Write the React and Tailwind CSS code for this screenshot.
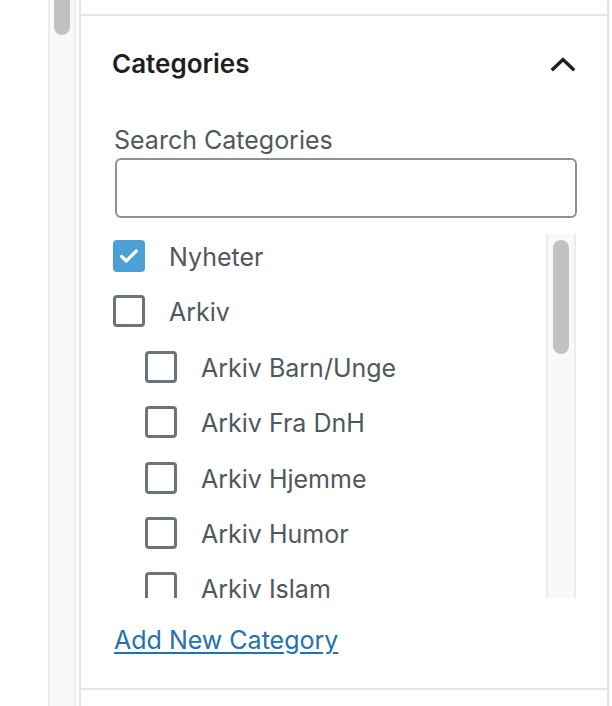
import React from 'react';

const categories = [
  { name: 'Nyheter', checked: true, child: false },
  { name: 'Arkiv', checked: false, child: false },
  { name: 'Arkiv Barn/Unge', checked: false, child: true },
  { name: 'Arkiv Fra DnH', checked: false, child: true },
  { name: 'Arkiv Hjemme', checked: false, child: true },
  { name: 'Arkiv Humor', checked: false, child: true },
  { name: 'Arkiv Islam', checked: false, child: true },
];

const Checkbox = ({ checked }) =>
  checked ? (
    <span className="w-[32px] h-[32px] shrink-0 rounded-[4px] bg-[#4ba0d4] flex items-center justify-center">
      <svg width="22" height="22" viewBox="0 0 24 24" fill="none">
        <path d="M4 12.5l5 5L20 6.5" stroke="#fff" strokeWidth="3.6" strokeLinecap="round" strokeLinejoin="round" />
      </svg>
    </span>
  ) : (
    <span className="w-[32px] h-[32px] shrink-0 rounded-[4px] border-[3px] border-[#6b737c] bg-white" />
  );

export default function App() {
  return (
    <div className="flex h-[706px] w-[612px] bg-white overflow-hidden" style={{ fontFamily: 'Inter, "Liberation Sans", sans-serif' }}>
      {/* page gutter */}
      <div className="w-[48px] shrink-0" />

      {/* editor scrollbar */}
      <div className="w-[28px] shrink-0 border-l-2 border-r-2 border-[#ececec] bg-[#f9f9f9] flex justify-center">
        <div className="w-[16px] h-[35px] rounded-b-full bg-[#c1c1c1]" />
      </div>
      <div className="w-[3px] shrink-0" />

      {/* sidebar panel */}
      <div className="w-[530px] shrink-0 border-l-2 border-r-2 border-[#e4e4e7] flex flex-col">
        <div className="h-[16px] shrink-0 border-b-2 border-[#e4e4e7]" />

        <div className="flex flex-col pl-[31px] pr-[30px] pt-[32px] pb-[33px] border-b-2 border-[#e4e4e7]">
          <div className="flex items-center justify-between h-[32px]">
            <h2 className="text-[26px] font-semibold text-[#1e1e1e] leading-none">Categories</h2>
            <svg width="26" height="18" viewBox="0 0 26 18" fill="none" className="mr-[1px]">
              <path d="M3 14L13 4.5 23 14" stroke="#1e1e1e" strokeWidth="3.4" strokeLinecap="square" />
            </svg>
          </div>

          <label className="mt-[45px] ml-[2px] text-[25px] leading-[30px] text-[#50575e]">Search Categories</label>
          <input
            type="text"
            className="mt-[3px] ml-[3px] h-[60px] rounded-[6px] border-2 border-[#8c8f94] bg-white outline-none"
          />

          <div className="mt-[16px] h-[364px] flex overflow-hidden">
            <ul className="flex-1 flex flex-col gap-[23.4px] pt-[6px]">
              {categories.map((c) => (
                <li key={c.name} className={`flex items-center gap-[24px] h-[32px] ${c.child ? 'pl-[33px]' : 'pl-[1px]'}`}>
                  <Checkbox checked={c.checked} />
                  <span className="text-[25px] leading-[32px] pt-[2px] text-[#50575e] whitespace-nowrap">{c.name}</span>
                </li>
              ))}
            </ul>
            <div className="w-[30px] shrink-0 border-l-2 border-r-2 border-[#ececec] bg-[#f9f9f9] flex justify-center pt-[6px] mr-[1px]">
              <div className="w-[16px] h-[114px] rounded-full bg-[#c1c1c1]" />
            </div>
          </div>

          <a href="#" className="mt-[27px] ml-[2px] text-[25px] leading-[30px] text-[#2271b1] underline underline-offset-[3px] self-start">
            Add New Category
          </a>
        </div>
      </div>
    </div>
  );
}
